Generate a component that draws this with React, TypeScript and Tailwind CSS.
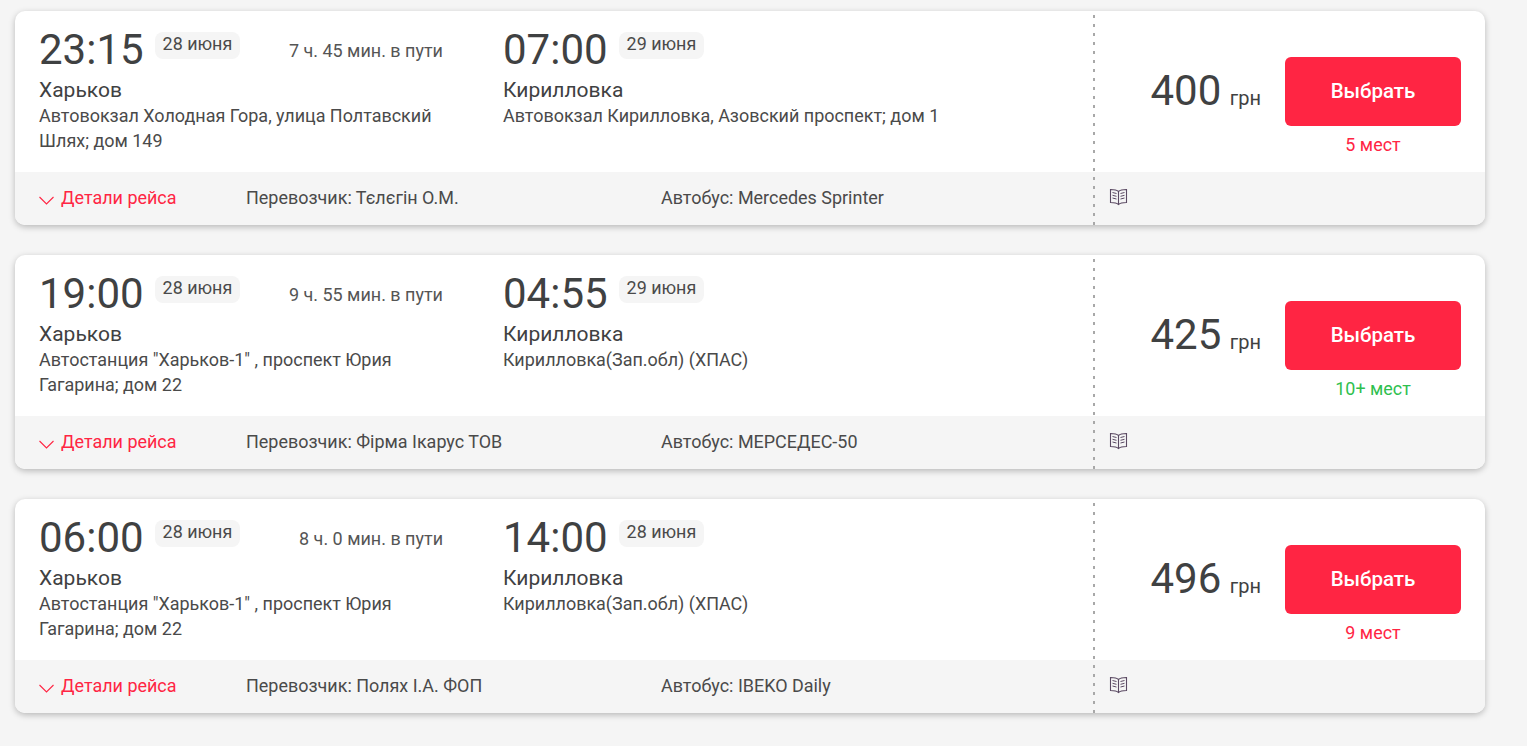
const trips = [
  {
    depTime: '23:15',
    depDate: '28 июня',
    duration: '7 ч. 45 мин. в пути',
    depAddress: 'Автовокзал Холодная Гора, улица Полтавский Шлях; дом 149',
    arrTime: '07:00',
    arrDate: '29 июня',
    arrAddress: 'Автовокзал Кирилловка, Азовский проспект; дом 1',
    price: '400',
    seats: '5 мест',
    few: true,
    carrier: 'Тєлєгін О.М.',
    bus: 'Mercedes Sprinter',
  },
  {
    depTime: '19:00',
    depDate: '28 июня',
    duration: '9 ч. 55 мин. в пути',
    depAddress: 'Автостанция "Харьков-1" , проспект Юрия Гагарина; дом 22',
    arrTime: '04:55',
    arrDate: '29 июня',
    arrAddress: 'Кирилловка(Зап.обл) (ХПАС)',
    price: '425',
    seats: '10+ мест',
    few: false,
    carrier: 'Фірма Ікарус ТОВ',
    bus: 'МЕРСЕДЕС-50',
  },
  {
    depTime: '06:00',
    depDate: '28 июня',
    duration: '8 ч. 0 мин. в пути',
    depAddress: 'Автостанция "Харьков-1" , проспект Юрия Гагарина; дом 22',
    arrTime: '14:00',
    arrDate: '28 июня',
    arrAddress: 'Кирилловка(Зап.обл) (ХПАС)',
    price: '496',
    seats: '9 мест',
    few: true,
    carrier: 'Полях І.А. ФОП',
    bus: 'IBEKO Daily',
  },
];

function BookIcon() {
  return (
    <svg width="19" height="19" viewBox="0 0 19 19" fill="none" stroke="#5b4a63" strokeWidth="1.1">
      <path d="M9.5 4.5C8 3.2 5 2.6 1.5 2.5V15.5C5 15.6 8 16.2 9.5 17.5C11 16.2 14 15.6 17.5 15.5V2.5C14 2.6 11 3.2 9.5 4.5Z" />
      <path d="M9.5 4.5V17.5" />
      <path d="M3.5 5.5L7.5 6.5M3.5 8.3L7.5 9.3M3.5 11L7.5 12M15.5 5.5L11.5 6.5M15.5 8.3L11.5 9.3M15.5 11L11.5 12" strokeWidth="1" />
    </svg>
  );
}

function TimeRow({ time, date }: { time: string; date: string }) {
  return (
    <div className="flex items-start">
      <span className="text-[42px] leading-[52px] text-[#3f4142]">{time}</span>
      <span className="ml-[11px] mt-[8px] h-[27px] rounded-lg bg-[#f5f5f5] px-2 text-[17.92px] leading-[23px] text-[#4a4a4a]">{date}</span>
    </div>
  );
}

function TripCard({ trip }: { trip: (typeof trips)[number] }) {
  return (
    <div className="flex h-[214px] w-[1470px] flex-col overflow-hidden rounded-[10px] bg-white shadow-[0_2px_6px_rgba(0,0,0,0.25)]">
      <div className="flex h-[161px]">
        <div className="flex w-[1078px] pl-6 pt-[13px]">
          <div className="w-[404px]">
            <div className="flex items-start justify-between">
              <TimeRow time={trip.depTime} date={trip.depDate} />
              <span className="mt-[15px] text-[17.98px] leading-[24px] text-[#555555]">{trip.duration}</span>
            </div>
            <div className="mt-[1px] text-[21px] leading-[26px] text-[#3f4142]">Харьков</div>
            <div className="text-[17.97px] leading-[25px] text-[#4a4a4a]">{trip.depAddress}</div>
          </div>
          <div className="ml-[60px] flex-1">
            <TimeRow time={trip.arrTime} date={trip.arrDate} />
            <div className="mt-[1px] text-[21px] leading-[26px] text-[#3f4142]">Кирилловка</div>
            <div className="text-[17.97px] leading-[25px] text-[#4a4a4a]">{trip.arrAddress}</div>
          </div>
        </div>
        <div className="mt-[4px] w-[2px] bg-[repeating-linear-gradient(to_bottom,#a8a8a8_0,#a8a8a8_3px,transparent_3px,transparent_9px)]" />
        <div className="flex flex-1 items-start justify-end pr-6 pt-[46px]">
          <div className="mr-6 mt-[6px] flex items-baseline text-[#3f4142]">
            <span className="text-[42px] leading-[56px]">{trip.price}</span>
            <span className="ml-[8.5px] text-[20px] leading-[26px]">грн</span>
          </div>
          <div className="flex w-[176px] flex-col items-center">
            <button className="h-[69px] w-full rounded-md bg-[#ff2543] text-[20.5px] font-medium text-white">Выбрать</button>
            <span className={`mt-[7px] text-[17.92px] leading-[24px] ${trip.few ? 'text-[#ff2543]' : 'text-[#2fbf4f]'}`}>{trip.seats}</span>
          </div>
        </div>
      </div>
      <div className="flex h-[53px] bg-[#f5f5f5]">
        <div className="flex w-[1078px] items-center pb-[1px] pl-6 text-[17.97px] text-[#4a4a4a]">
          <div className="flex w-[207px] items-center text-[#ff2543]">
            <svg className="mr-[7px] mt-[5px]" width="15" height="9" viewBox="0 0 15 9" fill="none" stroke="#ff2543" strokeWidth="1.1">
              <path d="M0.5 1L7.5 8L14.5 1" />
            </svg>
            Детали рейса
          </div>
          <div className="w-[415px]">Перевозчик: {trip.carrier}</div>
          <div>Автобус: {trip.bus}</div>
        </div>
        <div className="mt-[5px] w-[2px] bg-[repeating-linear-gradient(to_bottom,#a8a8a8_0,#a8a8a8_3px,transparent_3px,transparent_9px)]" />
        <div className="flex flex-1 items-center pb-[4px] pl-[14px]">
          <BookIcon />
        </div>
      </div>
    </div>
  );
}

export default function App() {
  return (
    <div className="flex min-h-screen flex-col gap-[30px] overflow-hidden bg-[#f5f5f5] pl-[15px] pt-[11px] font-['Roboto',sans-serif]">
      {trips.map((trip) => (
        <TripCard key={trip.depTime} trip={trip} />
      ))}
    </div>
  );
}
